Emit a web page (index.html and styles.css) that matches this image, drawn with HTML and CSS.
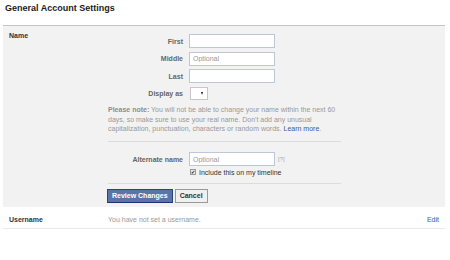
FILE: index.html
```html
<!DOCTYPE html>
<html lang="en">
<head>
    <meta charset="UTF-8">
    <title>General Account Settings</title>
    <link rel="stylesheet" href="styles.css">
</head>
<body>
    <div class="page">
        <h1 class="title">General Account Settings</h1>

        <div class="setting editing">
            <div class="setting-label">Name</div>
            <div class="setting-body">
                <div class="field-grid">
                    <label>First</label>
                    <input type="text">
                    <label>Middle</label>
                    <input type="text" placeholder="Optional">
                    <label>Last</label>
                    <input type="text">
                    <label>Display as</label>
                    <div class="select"><span class="arrow"></span></div>
                </div>

                <p class="note"><b>Please note:</b> You will not be able to change your name within the next 60 days, so make sure to use your real name. Don't add any unusual capitalization, punctuation, characters or random words. <a href="#">Learn more</a>.</p>

                <div class="alternate">
                    <div class="field-grid">
                        <label>Alternate name</label>
                        <div class="alt-field">
                            <input type="text" placeholder="Optional">
                            <span class="help">[?]</span>
                        </div>
                        <span></span>
                        <div class="check">
                            <span class="box">&#10004;</span>
                            <span>Include this on my timeline</span>
                        </div>
                    </div>
                </div>

                <div class="actions">
                    <button class="btn primary">Review Changes</button>
                    <button class="btn">Cancel</button>
                </div>
            </div>
        </div>

        <div class="setting row">
            <div class="setting-label">Username</div>
            <div class="setting-value">You have not set a username.</div>
            <a class="edit" href="#">Edit</a>
        </div>
    </div>
</body>
</html>
```

FILE: styles.css
```css
body {
    margin: 0;
    background: #fff;
    font-family: 'Liberation Sans', Arial, sans-serif;
    font-size: 7px;
    color: #333;
}

.page {
    width: 442px;
    margin-left: 3px;
}

.title {
    margin: 0;
    padding: 3px 2px 12px;
    font-size: 9px;
    line-height: 10px;
    font-weight: bold;
    color: #1c1c1c;
}

.setting {
    display: flex;
}

.setting-label {
    width: 99px;
    padding-left: 6px;
    font-weight: bold;
    color: #333;
    line-height: 9px;
}

.editing {
    background: #f2f2f2;
    border-top: 1px solid #c4c4c4;
    padding: 5px 0 4px;
}

.setting-body {
    width: 233px;
    padding-top: 3px;
}

.field-grid {
    display: grid;
    grid-template-columns: 75px 1fr;
    column-gap: 6px;
    row-gap: 3.6px;
    align-items: center;
}

.field-grid label {
    text-align: right;
    font-weight: bold;
    color: #666;
}

input {
    width: 86px;
    height: 14px;
    box-sizing: border-box;
    border: 1px solid #bdc7d8;
    padding: 0 3px;
    font-family: inherit;
    font-size: 7px;
    color: #333;
    background: #fff;
    margin: 0;
}

input::placeholder {
    color: #999;
}

.select {
    width: 18px;
    height: 13px;
    box-sizing: border-box;
    margin-left: 1px;
    border: 1px solid #c6c6c6;
    background: #fff;
    display: flex;
    align-items: center;
    justify-content: flex-end;
    padding-right: 4px;
}

.arrow {
    width: 0;
    height: 0;
    border-left: 1.5px solid transparent;
    border-right: 1.5px solid transparent;
    border-top: 3px solid #111;
}

.note {
    margin: 5.5px 0 0;
    line-height: 9.5px;
    color: #999;
}

.note b {
    color: #8d8d8d;
}

.note a {
    color: #3b5998;
    text-decoration: none;
}

.alternate {
    margin-top: 7.5px;
    border-top: 1px solid #dcdcdc;
    border-bottom: 1px solid #dcdcdc;
    padding: 10px 0 6px;
}

.alternate .field-grid {
    row-gap: 1.5px;
}

.alt-field {
    display: flex;
    align-items: center;
    gap: 3px;
}

.help {
    color: #aaa;
    font-size: 6px;
}

.check {
    display: flex;
    align-items: center;
    gap: 3px;
    height: 9px;
    color: #333;
}

.box {
    width: 6px;
    height: 6px;
    box-sizing: border-box;
    margin-left: 1px;
    border: 1px solid #999;
    background: #e6e6e6;
    font-size: 5px;
    line-height: 4px;
    text-align: center;
    color: #222;
}

.actions {
    display: flex;
    gap: 2px;
    padding-top: 5.5px;
}

.btn {
    height: 14px;
    box-sizing: border-box;
    padding: 0 4px;
    font-family: inherit;
    font-size: 7px;
    font-weight: bold;
    line-height: 12px;
    white-space: nowrap;
    border: 1px solid #999;
    background: #f0f0f0;
    color: #333;
    margin: 0;
}

.btn.primary {
    margin-left: -1px;
    background: #5b74a8;
    border-color: #29447e #29447e #1a356e;
    color: #fff;
}

.row {
    padding: 8px 6px 4px 0;
    line-height: 9px;
    border-bottom: 1px solid #e9e9e9;
}

.setting-value {
    flex: 1;
    color: #999;
}

.edit {
    color: #3b5998;
    text-decoration: none;
}
```
